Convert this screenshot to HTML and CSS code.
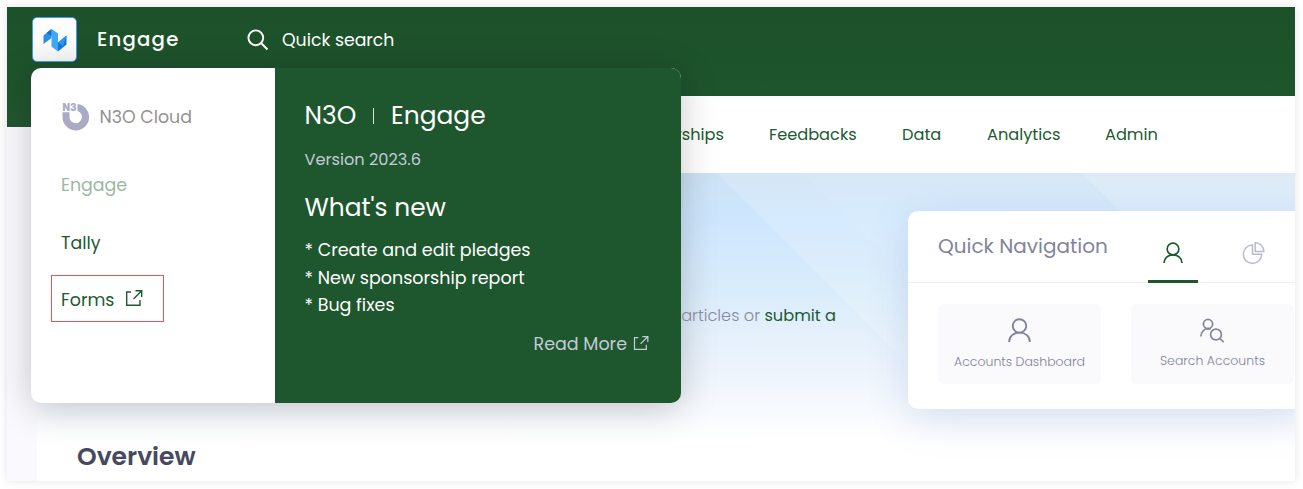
FILE: index.html
```
<!DOCTYPE html>
<html lang="en">
<head>
<meta charset="utf-8">
<title>N3O Engage</title>
<link rel="stylesheet" href="styles.css">
</head>
<body>
<svg width="0" height="0" class="defs">
  <defs>
    <symbol id="external" viewBox="0 0 18 18"><path d="M6 3H1.7v13.3H15V11M10.5 1.8h6.2V8M16.2 2.3L8.5 10" fill="none" stroke="currentColor" stroke-width="1.4"/></symbol>
    <symbol id="user" viewBox="0 0 24 26"><g fill="none" stroke="currentColor" stroke-width="2"><circle cx="12" cy="8.2" r="7"/><path d="M1.2 25C1.2 19 6 15.2 12 15.2S22.8 19 22.8 25"/></g></symbol>
  </defs>
</svg>
<div class="frame">
  <header class="topbar">
    <div class="logo">
      <svg width="24" height="24" viewBox="0 0 24 24"><path d="M0.500 7.500L8.500 1v9L0.500 16z" fill="#2b8df0"/><path d="M8.500 1l6.500 4.500v18l-6.500-5z" fill="#3fa9f8"/><path d="M15 14.500l8.500-7v9L15 23.500z" fill="#1478d4"/><path d="M3.500 5L8.500 1v7z" fill="#1170cc"/><path d="M15 14.500l8.500-7L20 18z" fill="#2f97f2"/></svg>
    </div>
    <span class="brand">Engage</span>
    <svg class="search-icon" width="22" height="22" viewBox="0 0 22 22"><g fill="none" stroke="#fff" stroke-width="1.900"><circle cx="8.800" cy="8.800" r="7.400"/><path d="M14 14l6.500 6.500"/></g></svg>
    <span class="quick">Quick search</span>
  </header>
  <main class="content">
    <nav class="nav">
      <a class="n1">Sponsorships</a><a class="n2">Feedbacks</a><a class="n3">Data</a><a class="n4">Analytics</a><a class="n5">Admin</a>
    </nav>
    <section class="hero">
      <svg class="rays" width="1258" height="308" viewBox="0 0 1258 308"><path d="M680 0H1258V308H988z" fill="#fff" opacity=".16"/><path d="M765 0H1258V308H1073z" fill="#fff" opacity=".05"/><path d="M1045 0H1258V213z" fill="#fff" opacity=".18"/></svg>
      <div class="left">
        <p class="help"><span class="grey">articles or</span> <a>submit a</a></p>
        <h2 class="overview">Overview</h2>
      </div>
      <section class="card">
        <div class="card-head">
          <h3>Quick Navigation</h3>
          <div class="tab active"><svg width="20" height="22"><use href="#user"/></svg></div>
          <div class="tab pie"><svg width="24" height="24" viewBox="0 0 24 24"><path d="M11.500 4A9.200 9.200 0 1 0 20.700 13.200H11.500zM14.200 1.700v8.800h8.700a8.700 8.800 0 0 0-8.700-8.800z" fill="none" stroke="#b9bacf" stroke-width="1.500"/></svg></div>
        </div>
        <div class="tiles">
          <div class="tile"><svg width="23" height="25"><use href="#user"/></svg><span>Accounts Dashboard</span></div>
          <div class="tile second"><svg width="26" height="25" viewBox="0 0 26 25"><g fill="none" stroke="#82849a" stroke-width="1.700"><circle cx="8" cy="6" r="4.600"/><path d="M.9 18.500c0-4 2.700-7.600 6.900-7.800 1.200 0 2 .1 2.800.5"/><circle cx="16" cy="16.500" r="5.400"/><path d="M20 20.500l3.700 3.700"/></g></svg><span>Search Accounts</span></div>
        </div>
      </section>
    </section>
  </main>
</div>
<aside class="popover">
  <div class="apps">
    <div class="cloud">
      <svg width="28" height="28" viewBox="0 0 28 28"><path d="M15.500.9A13.300 13.300 0 1 1 .5 14.200V9.300H7.500V14A6.200 6.200 0 1 0 15.500 8z" fill="#a9abc5"/><text x="0.500" y="8" textLength="14" lengthAdjust="spacingAndGlyphs" class="mark">N3</text></svg>
      <span>N3O Cloud</span>
    </div>
    <a class="app muted">Engage</a>
    <a class="app tally">Tally</a>
    <a class="app forms"><span>Forms</span><svg width="18" height="18"><use href="#external"/></svg></a>
  </div>
  <div class="news">
    <div class="title"><span class="n3o">N3O</span><i></i><span class="eng">Engage</span></div>
    <div class="version">Version 2023.6</div>
    <div class="whats">What's new</div>
    <div class="list l1">* Create and edit pledges</div>
    <div class="list l2">* New sponsorship report</div>
    <div class="list l3">* Bug fixes</div>
    <a class="more"><span>Read More</span><svg width="16" height="16"><use href="#external"/></svg></a>
  </div>
</aside>
</body>
</html>
```
FILE: styles.css
```
* { box-sizing: border-box; }
body {
  margin: 0;
  height: 489px;
  padding: 7px 8px 8px 7px;
  overflow: hidden;
  background: #fff;
  font-family: Poppins, Inter, "Open Sans", sans-serif;
  white-space: nowrap;
}
h2, h3, p { margin: 0; font-weight: 400; }
svg { display: block; flex: none; }
.defs { position: absolute; }
.frame {
  height: 474px;
  overflow: hidden;
  background: #f9f9fe;
  box-shadow: 0 0 9px rgba(0, 0, 0, .11);
}
.topbar {
  height: 120px;
  padding: 10px 0 0 25px;
  display: flex;
  align-items: flex-start;
  background: linear-gradient(#1c512a, #1e542c 60%, #225730);
  color: #fff;
}
.logo {
  width: 45px; height: 45px;
  display: grid; place-items: center;
  border: 1px solid #3b9df5; border-radius: 5px;
  background: linear-gradient(#fff, #f7f7f7);
}
.brand { width: 83px; margin-left: 20px; font-size: 19.7px; font-weight: 500; line-height: 44px; letter-spacing: 1.2px; }
.search-icon { margin: 12px 0 0 67px; }
.quick { margin-left: 13px; font-size: 17.3px; line-height: 46px; }
.content { height: 385px; margin: -31px 0 0 30px; background: #fff; }
.nav { height: 77px; padding-left: 575px; display: flex; gap: 45px; font-size: 16.2px; line-height: 77px; color: #215a30; }
.n1 { width: 112px; text-align: right; }
.n2 { width: 88px; }
.n3 { width: 40px; }
.n4 { width: 73px; }
.hero {
  height: 308px;
  display: grid;
  grid-template-columns: 871px 1fr;
  background: linear-gradient(#cde2f4, #cde6fd 14%, #d9ecfb 38%, #ecf3fc 62%, #fff 88%);
}
.rays { grid-area: 1 / 1 / 2 / 3; }
.left { grid-area: 1 / 1; z-index: 1; padding: 130px 0 0 40px; }
.help { width: 759px; text-align: right; font-size: 16.2px; line-height: 25px; color: #215a30; }
.grey { color: #8587a0; font-weight: 300; }
.overview { margin-top: 112px; font-size: 25px; font-weight: 600; line-height: 34px; color: #464960; }
.card {
  grid-area: 1 / 2; z-index: 1;
  height: 198px; margin-top: 38px;
  border-radius: 10px 0 0 10px;
  background: #fff;
  box-shadow: 0 10px 40px rgba(60, 105, 185, .18);
}
.card-head { height: 72px; padding-left: 30px; display: flex; border-bottom: 1px solid #efeff2; }
.card-head h3 { width: 210px; font-size: 20px; line-height: 70px; color: #82849a; }
.tab { width: 50px; height: 72px; margin-right: 30px; padding-top: 14px; display: grid; place-items: center; color: #1e562d; }
.tab.active { border-bottom: 3px solid #1e562d; }
.tab.pie { padding-top: 12px; }
.tiles { padding: 21px 0 0 30px; display: flex; gap: 30px; }
.tile { flex: none; width: 163px; height: 80px; padding-top: 14px; border-radius: 6px; background: #fafafd; color: #82849a; display: flex; flex-direction: column; align-items: center; font-size: 12.5px; font-weight: 300; }
.tile span { margin-top: 10px; line-height: 18px; }
.tile.second span { margin-top: 9px; }
.popover {
  position: absolute; left: 31px; top: 68px;
  width: 650px; height: 335px;
  display: flex; overflow: hidden;
  border-radius: 10px;
  background: #fff;
  box-shadow: 0 5px 36px rgba(0, 0, 0, .22);
}
.apps { width: 244px; padding: 35px 0 0 20px; font-size: 17.4px; color: #215a30; }
.cloud { height: 28px; padding-left: 10.500px; display: flex; gap: 10px; color: #929292; line-height: 29px; }
.mark { font: 900 10.500px Inter, sans-serif; fill: #a9abc5; }
.app { display: block; padding-left: 10px; line-height: 28px; }
.muted { margin-top: 40px; color: #9bb8a2; }
.tally { margin-top: 30px; }
.forms { width: 113px; height: 47px; margin-top: 18px; padding-left: 9px; display: flex; border: 1px solid #ec5353; line-height: 48px; }
.forms span { width: 54px; }
.forms svg { margin: 13px 0 0 10px; }
.news { flex: 1; padding: 30px 32px 0 29.500px; background: #1e562d; color: #fff; }
.title { height: 36px; display: flex; align-items: center; font-size: 24.9px; line-height: 36px; }
.n3o { width: 52.500px; }
.title i { width: 1px; height: 16px; margin: 0 17px 0 16px; background: #dbe5dd; }
.version { margin-top: 14px; line-height: 24px; font-size: 16.2px; color: #c3cbd6; }
.whats { margin-top: 18px; line-height: 36px; font-size: 24.9px; }
.list { font-size: 17.500px; line-height: 27.500px; }
.l1 { margin-top: 11px; }
.more { margin-top: 10px; display: flex; justify-content: flex-end; gap: 6px; font-size: 17.500px; line-height: 28px; color: #c3cbd6; }
.more svg { margin-top: 5px; }
```
